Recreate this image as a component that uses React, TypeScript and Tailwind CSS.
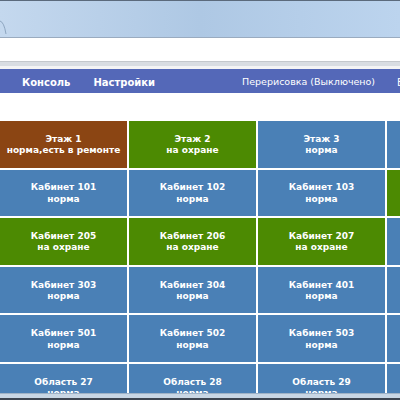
import React from 'react'

type Cell = { title: string; status: string; color: 'brown' | 'green' | 'blue' }

const colors: Record<Cell['color'], string> = {
  brown: 'bg-[#8b4513]',
  green: 'bg-[#4c8a02]',
  blue: 'bg-[#4a80b6]',
}

const rows: Cell[][] = [
  [
    { title: 'Этаж 1', status: 'норма,есть в ремонте', color: 'brown' },
    { title: 'Этаж 2', status: 'на охране', color: 'green' },
    { title: 'Этаж 3', status: 'норма', color: 'blue' },
    { title: 'Этаж 4', status: 'норма', color: 'blue' },
  ],
  [
    { title: 'Кабинет 101', status: 'норма', color: 'blue' },
    { title: 'Кабинет 102', status: 'норма', color: 'blue' },
    { title: 'Кабинет 103', status: 'норма', color: 'blue' },
    { title: 'Кабинет 104', status: 'на охране', color: 'green' },
  ],
  [
    { title: 'Кабинет 205', status: 'на охране', color: 'green' },
    { title: 'Кабинет 206', status: 'на охране', color: 'green' },
    { title: 'Кабинет 207', status: 'на охране', color: 'green' },
    { title: 'Кабинет 208', status: 'норма', color: 'blue' },
  ],
  [
    { title: 'Кабинет 303', status: 'норма', color: 'blue' },
    { title: 'Кабинет 304', status: 'норма', color: 'blue' },
    { title: 'Кабинет 401', status: 'норма', color: 'blue' },
    { title: 'Кабинет 402', status: 'норма', color: 'blue' },
  ],
  [
    { title: 'Кабинет 501', status: 'норма', color: 'blue' },
    { title: 'Кабинет 502', status: 'норма', color: 'blue' },
    { title: 'Кабинет 503', status: 'норма', color: 'blue' },
    { title: 'Кабинет 504', status: 'норма', color: 'blue' },
  ],
  [
    { title: 'Область 27', status: 'норма', color: 'blue' },
    { title: 'Область 28', status: 'норма', color: 'blue' },
    { title: 'Область 29', status: 'норма', color: 'blue' },
    { title: 'Область 30', status: 'норма', color: 'blue' },
  ],
]

export default function App() {
  return (
    <div className="w-[400px] h-[400px] overflow-hidden flex flex-col bg-white font-['DejaVu_Sans',Verdana,sans-serif]">
      {/* window title bar */}
      <div className="h-[37px] shrink-0 border-t border-[#5b6a7c] bg-gradient-to-r from-[#c4d8ee] via-[#aec8e4] to-[#bcd4ee] relative">
        <svg className="absolute left-0 top-[19px]" width="8" height="15" viewBox="0 0 8 15">
          <path d="M0 1 Q4 2 6 14" fill="none" stroke="#8ea6c0" strokeWidth="1" />
        </svg>
      </div>
      {/* address area */}
      <div className="h-[24px] shrink-0 border-t border-[#9aabbf] bg-white" />
      <div className="h-[5px] shrink-0 bg-[#d9dde2] border-t border-[#c4c8cc]" />
      <div className="h-[3px] shrink-0 bg-[#f4f4f4]" />
      {/* nav */}
      <div className="h-[24px] shrink-0 bg-[#5468b8] flex items-center pt-[3px] text-white text-[10px] whitespace-nowrap overflow-hidden">
        <span className="ml-[22px] font-bold">Консоль</span>
        <span className="ml-[23px] font-bold">Настройки</span>
        <span className="ml-[87px] text-[9.5px]">Перерисовка (Выключено)</span>
        <span className="ml-[22px]">Выход</span>
      </div>
      <div className="h-[28px] shrink-0" />
      {/* grid */}
      <div className="flex-1 min-h-0 flex flex-col gap-[2px] overflow-hidden">
        {rows.map((row, i) => (
          <div key={i} className="flex gap-[2px] h-[46.6px] shrink-0 overflow-hidden">
            {row.map((c, j) => (
              <div
                key={j}
                className={`w-[127px] shrink-0 ${colors[c.color]} flex flex-col items-center justify-center pt-[2px] text-white font-bold text-[9px] leading-[11.5px] text-center whitespace-nowrap`}
              >
                <span>{c.title}</span>
                <span>{c.status}</span>
              </div>
            ))}
          </div>
        ))}
      </div>
      {/* window bottom frame */}
      <div className="h-[7px] shrink-0 bg-[#c8d6e4] border-t border-[#9fb2c6] border-b-2 border-b-[#3c4450]" />
    </div>
  )
}
